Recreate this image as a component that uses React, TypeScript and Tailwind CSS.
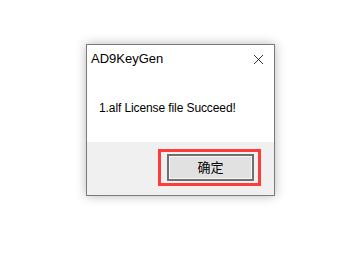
import { X } from 'lucide-react'

export default function App() {
  return (
    <div className="w-[348px] h-[263px] bg-white pt-[44px] pl-[86px]" style={{ fontFamily: '"Liberation Sans", "Noto Sans CJK SC", sans-serif' }}>
      <div className="w-[189px] h-[152px] border border-[#7a7a7a] bg-white flex flex-col shadow-[0_0_10px_rgba(0,0,0,0.28)]">
        <div className="h-[28px] flex items-center justify-between pl-[4px] pr-[7px]">
          <span className="text-[13px] text-black">AD9KeyGen</span>
          <X className="w-[17px] h-[17px] text-black" strokeWidth={1.1} />
        </div>
        <div className="h-[69px] flex items-center pl-[12px]">
          <span className="text-[12px] text-black tracking-[-0.1px]">1.alf License file Succeed!</span>
        </div>
        <div className="flex-1 bg-[#f0f0f0] flex justify-end items-start pt-[7px] pr-[13px]">
          <div className="border-[3px] border-[#ff3b3b] pt-[2px] pb-[2px] pl-[6px] pr-[4px]">
            <button className="w-[87px] h-[27px] bg-[#e1e1e1] border-2 border-[#6f6f6f] shadow-[inset_0_0_0_1px_#f6f6f6] text-[13px] text-black flex items-center justify-center">
              确定
            </button>
          </div>
        </div>
      </div>
    </div>
  )
}
